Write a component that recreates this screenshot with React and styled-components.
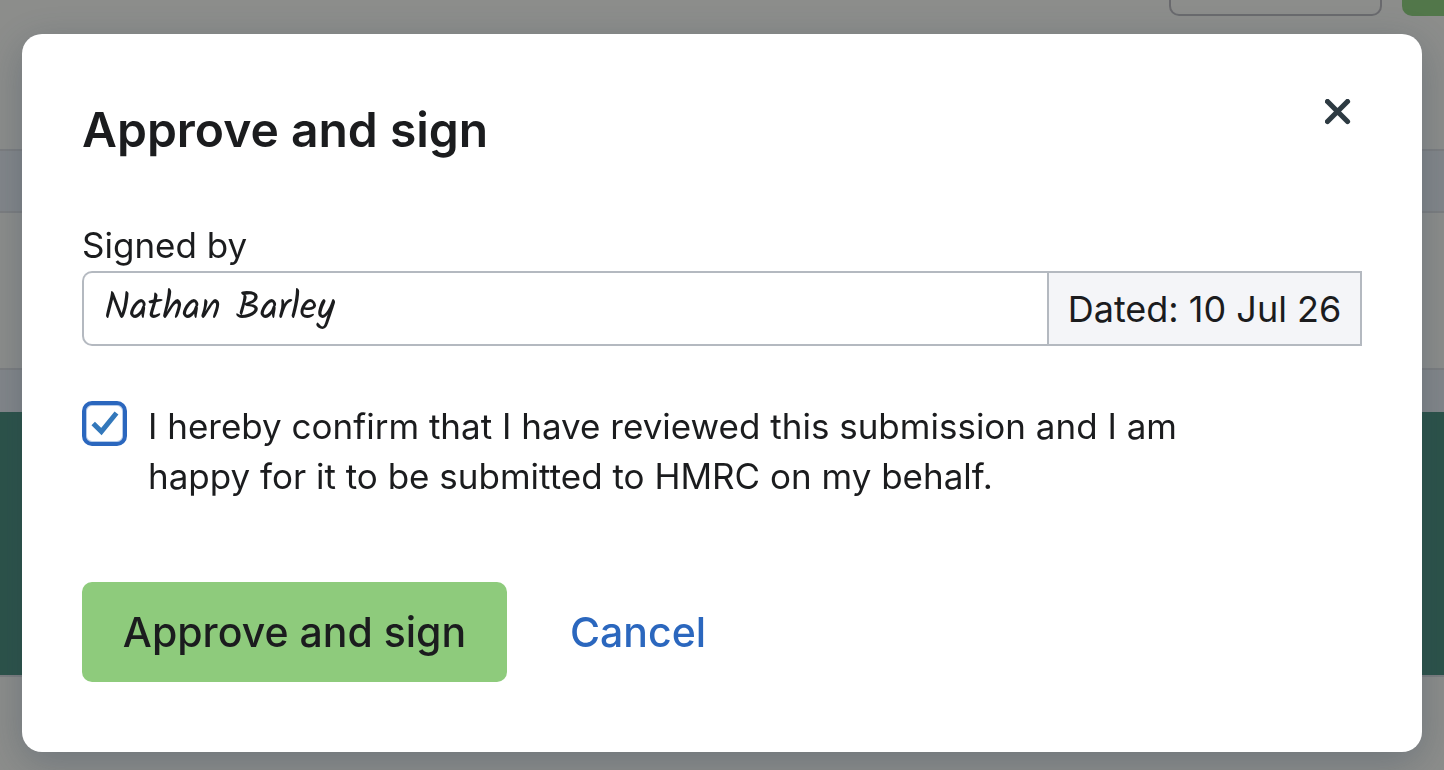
import React, { useState } from "react";
import styled, { createGlobalStyle } from "styled-components";

const GlobalStyle = createGlobalStyle`
  *, *::before, *::after { box-sizing: border-box; }
  body {
    margin: 0;
    background: #f9fbf8;
    color: #1b1c1e;
    font-family: Inter, "Liberation Sans", sans-serif;
  }
  button, input { font: inherit; color: inherit; }
`;

const Page = styled.main`
  display: flex;
  flex-direction: column;
  height: 100vh;
  overflow: hidden;
`;

const Toolbar = styled.div`
  display: flex;
  justify-content: flex-end;
  align-items: flex-start;
  gap: 20px;
  height: 149px;
  overflow: hidden;
`;

const ToolbarAction = styled.div`
  width: ${(p) => (p.$primary ? "42px" : "213px")};
  height: 16px;
  border: ${(p) => (p.$primary ? "0" : "2px solid #bcbcc3")};
  border-top: 0;
  border-radius: ${(p) => (p.$primary ? "0 0 0 10px" : "0 0 10px 10px")};
  background: ${(p) => (p.$primary ? "#92d484" : "transparent")};
`;

const Band = styled.div`
  height: ${(p) => p.$height}px;
  background: ${(p) => p.$fill || "transparent"};
  border-top: ${(p) => (p.$ruled ? "2px solid #dde0e4" : "0")};
`;

const Backdrop = styled.div`
  position: fixed;
  inset: 0;
  display: flex;
  flex-direction: column;
  padding: 34px 22px 18px;
  background: rgba(0, 0, 0, 0.44);
  overflow: auto;
`;

const Dialog = styled.form`
  padding: 54px 60px 70px;
  border-radius: 20px;
  background: #fff;
  box-shadow: 0 10px 40px rgba(40, 60, 80, 0.3);
`;

const Header = styled.header`
  display: flex;
  justify-content: space-between;
  align-items: flex-start;
  margin-bottom: 48px;
`;

const Title = styled.h2`
  margin: 0;
  font-size: 48px;
  line-height: 84px;
  font-weight: 600;
`;

const CloseButton = styled.button`
  display: grid;
  place-items: center;
  width: 48px;
  height: 48px;
  padding: 0;
  border: 0;
  background: none;
  color: #2d3a42;
  cursor: pointer;
`;

const FieldLabel = styled.label`
  display: block;
  font-size: 35px;
  line-height: 51px;
`;

const FieldRow = styled.div`
  display: flex;
  height: 75px;
  margin-bottom: 55px;
`;

const SignatureInput = styled.input`
  flex: 1;
  min-width: 0;
  padding: 0 20px;
  border: 2px solid #b4b9c0;
  border-right: 0;
  border-radius: 10px 0 0 10px;
  background: #fff;
  font-family: Kalam, cursive;
  font-size: 38px;
  outline: none;
`;

const DateAddon = styled.span`
  display: flex;
  align-items: center;
  justify-content: center;
  width: 315px;
  border: 2px solid #b4b9c0;
  background: #f4f5f8;
  font-size: 36px;
  white-space: nowrap;
`;

const Confirmation = styled.div`
  display: flex;
  align-items: flex-start;
  gap: 21px;
  margin-bottom: 81px;
`;

const CheckFrame = styled.span`
  display: grid;
  flex: none;
  width: 45px;
  height: 45px;

  > * { grid-area: 1 / 1; }
`;

const Checkbox = styled.input`
  appearance: none;
  width: 45px;
  height: 45px;
  margin: 0;
  border: 4px solid #2b67be;
  border-radius: 10px;
  background: #fff;
  box-shadow: inset 0 0 0 1px #b5cbe9;
`;

const CheckMark = styled.svg`
  pointer-events: none;
`;

const ConfirmText = styled.label`
  max-width: 1060px;
  font-size: 35px;
  line-height: 50px;
`;

const Actions = styled.div`
  display: flex;
  align-items: center;
  gap: 63px;
`;

const SubmitButton = styled.button`
  width: 425px;
  height: 100px;
  padding: 0;
  border: 0;
  border-radius: 10px;
  background: #8ecb7c;
  font-size: 41px;
  font-weight: 500;
  white-space: nowrap;
  cursor: pointer;
`;

const CancelButton = styled.button`
  padding: 0;
  border: 0;
  background: none;
  color: #2b67be;
  font-size: 41px;
  font-weight: 500;
  cursor: pointer;
`;

export default function App() {
  const [confirmed, setConfirmed] = useState(true);

  return (
    <>
      <GlobalStyle />
      <Page aria-hidden="true">
        <Toolbar>
          <ToolbarAction />
          <ToolbarAction $primary />
        </Toolbar>
        <Band $height={62} $fill="#e9eff5" $ruled />
        <Band $height={157} $ruled />
        <Band $height={44} $fill="#e9eff5" $ruled />
        <Band $height={263} $fill="#4e9382" />
        <Band $height={95} $ruled />
      </Page>
      <Backdrop>
        <Dialog
          role="dialog"
          aria-modal="true"
          aria-labelledby="dialog-title"
          onSubmit={(e) => e.preventDefault()}
        >
          <Header>
            <Title id="dialog-title">Approve and sign</Title>
            <CloseButton type="button" aria-label="Close">
              <svg width="26" height="26" viewBox="0 0 26 26" fill="none" aria-hidden="true">
                <path d="M2.5 2.5L22.5 22.5M22.5 2.5L2.5 22.5" stroke="currentColor" strokeWidth="5.2" strokeLinecap="round" />
              </svg>
            </CloseButton>
          </Header>

          <FieldLabel htmlFor="signed-by">Signed by</FieldLabel>
          <FieldRow>
            <SignatureInput id="signed-by" type="text" defaultValue="Nathan Barley" />
            <DateAddon>Dated: 10 Jul 26</DateAddon>
          </FieldRow>

          <Confirmation>
            <CheckFrame>
              <Checkbox
                id="confirm"
                type="checkbox"
                checked={confirmed}
                onChange={(e) => setConfirmed(e.target.checked)}
              />
              {confirmed && (
                <CheckMark width="45" height="45" viewBox="0 0 45 45" fill="none" aria-hidden="true">
                  <path d="M11.2 22.5L19.4 30.5L34.5 12" stroke="#3378bb" strokeWidth="5" />
                </CheckMark>
              )}
            </CheckFrame>
            <ConfirmText htmlFor="confirm">
              I hereby confirm that I have reviewed this submission and I am happy for it to be
              submitted to HMRC on my behalf.
            </ConfirmText>
          </Confirmation>

          <Actions>
            <SubmitButton type="submit">Approve and sign</SubmitButton>
            <CancelButton type="button">Cancel</CancelButton>
          </Actions>
        </Dialog>
      </Backdrop>
    </>
  );
}
